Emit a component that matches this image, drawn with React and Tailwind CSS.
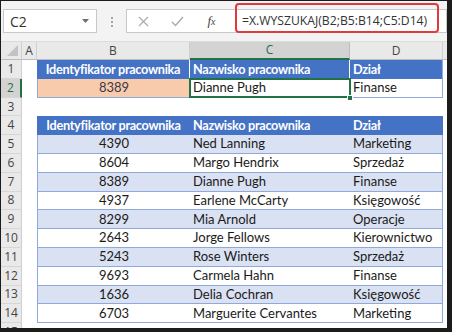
import React from "react";

const data = [
  ["4390", "Ned Lanning", "Marketing"],
  ["8604", "Margo Hendrix", "Sprzedaż"],
  ["8389", "Dianne Pugh", "Finanse"],
  ["4937", "Earlene McCarty", "Księgowość"],
  ["8299", "Mia Arnold", "Operacje"],
  ["2643", "Jorge Fellows", "Kierownictwo"],
  ["5243", "Rose Winters", "Sprzedaż"],
  ["9693", "Carmela Hahn", "Finanse"],
  ["1636", "Delia Cochran", "Księgowość"],
  ["6703", "Marguerite Cervantes", "Marketing"],
];

function RowHead({ n, sel }) {
  return (
    <div
      className={`w-[21px] shrink-0 h-full flex items-center justify-center border-b border-b-[#d6d6d6] text-[12px] [font-family:'Open_Sans',sans-serif] ${
        sel
          ? "bg-[#d3d3d3] text-[#1e7145] border-r-2 border-r-[#217346]"
          : "bg-[#e9e9e9] text-[#444] border-r border-r-[#cfcfcf]"
      }`}
    >
      {n}
    </div>
  );
}

function Row({ n, sel, children }) {
  return (
    <div className="flex h-[18.8px] shrink-0">
      <RowHead n={n} sel={sel} />
      <div className="w-[15px] shrink-0 bg-white" />
      {children}
      <div className="flex-1 bg-white" />
    </div>
  );
}

function EmptyCells() {
  return (
    <>
      <div className="w-[153px] shrink-0 bg-white" />
      <div className="w-[160px] shrink-0 bg-white" />
      <div className="w-[93px] shrink-0 bg-white" />
    </>
  );
}

export default function App() {
  return (
    <div className="w-[452px] h-[332px] overflow-hidden bg-white border-l border-t border-r-[5px] border-b-[4px] border-[#1c1c1c] flex flex-col [font-family:Lato,sans-serif]">
      {/* Formula toolbar */}
      <div className="relative h-[40px] shrink-0 bg-[#f3f3f3] flex items-start pt-[8px]">
        <div className="ml-[2px] w-[94px] h-[24px] shrink-0 bg-white border border-[#c9c9c9] flex items-center justify-between pl-[6px] pr-[7px]">
          <span className="text-[14px] text-[#333] [font-family:'Open_Sans',sans-serif]">C2</span>
          <svg width="7" height="4" viewBox="0 0 7 4">
            <path d="M0 0 L7 0 L3.5 4 Z" fill="#6e6e6e" />
          </svg>
        </div>
        <div className="ml-[14px] mt-[8px] flex flex-col gap-[2px] shrink-0">
          <div className="w-[2px] h-[2px] bg-[#a5a5a5]" />
          <div className="w-[2px] h-[2px] bg-[#a5a5a5]" />
          <div className="w-[2px] h-[2px] bg-[#a5a5a5]" />
        </div>
        <div className="ml-[13px] flex-1 h-[24px] bg-white border border-[#c9c9c9] flex items-center">
          <div className="w-[33px] flex justify-center">
            <svg width="11" height="11" viewBox="0 0 11 11">
              <path d="M1 1 L10 10 M10 1 L1 10" stroke="#ababab" strokeWidth="1.2" />
            </svg>
          </div>
          <div className="w-[35px] flex justify-center">
            <svg width="13" height="11" viewBox="0 0 13 11">
              <path d="M1 6 L4.5 9.5 L12 1" stroke="#ababab" strokeWidth="1.4" fill="none" />
            </svg>
          </div>
          <div className="w-[33px] flex justify-center">
            <span className="italic text-[13px] text-[#444] [font-family:'Liberation_Serif',serif]">
              f<span className="text-[10px]">x</span>
            </span>
          </div>
          <span className="ml-[14px] text-[12.2px] text-[#333] whitespace-nowrap [font-family:'Open_Sans',sans-serif]">
            =X.WYSZUKAJ(B2;B5:B14;C5:D14)
          </span>
        </div>
        <div className="absolute left-[234px] top-[2px] w-[204px] h-[30px] border-2 border-[#e0393e] rounded-[4px]" />
      </div>

      {/* Column headers */}
      <div className="flex h-[19px] shrink-0 bg-[#e9e9e9] border-t border-t-[#dcdcdc] text-[12px] text-[#444] [font-family:'Open_Sans',sans-serif]">
        <div className="w-[21px] shrink-0 border-r border-r-[#cfcfcf] border-b border-b-[#bdbdbd] flex items-end justify-end pr-[3px] pb-[3px]">
          <svg width="11" height="11" viewBox="0 0 11 11">
            <path d="M11 0 L11 11 L0 11 Z" fill="#c3c3c3" />
          </svg>
        </div>
        <div className="w-[15px] shrink-0 border-r border-r-[#cfcfcf] border-b border-b-[#bdbdbd] flex items-center justify-center">A</div>
        <div className="w-[153px] shrink-0 border-r border-r-[#cfcfcf] border-b border-b-[#bdbdbd] flex items-center justify-center">B</div>
        <div className="w-[160px] shrink-0 bg-[#d3d3d3] text-[#1e7145] border-r border-r-[#bdbdbd] border-b-2 border-b-[#217346] flex items-center justify-center">C</div>
        <div className="w-[93px] shrink-0 border-r border-r-[#cfcfcf] border-b border-b-[#bdbdbd] flex items-center justify-center">D</div>
        <div className="flex-1 border-b border-b-[#bdbdbd]" />
      </div>

      {/* Row 1 */}
      <Row n="1">
        <div className="w-[153px] shrink-0 bg-[#4472c4] text-white font-bold text-[12.7px] tracking-[-0.3px] flex items-center justify-center border-r border-r-white">
          Identyfikator pracownika
        </div>
        <div className="w-[160px] shrink-0 bg-[#4472c4] text-white font-bold text-[12.7px] tracking-[-0.3px] flex items-center pl-[3px] border-r border-r-white">
          Nazwisko pracownika
        </div>
        <div className="w-[93px] shrink-0 bg-[#4472c4] text-white font-bold text-[12.7px] tracking-[-0.3px] flex items-center pl-[3px] border-r border-r-[#8eaadb]">
          Dział
        </div>
      </Row>

      {/* Row 2 */}
      <Row n="2" sel>
        <div className="w-[153px] shrink-0 bg-[#f8cbad] text-[#3a3848] text-[13px] flex items-center justify-center border-l border-b border-[#8eaadb]">
          8389
        </div>
        <div className="relative w-[160px] shrink-0 bg-white text-[#1a1a1a] text-[13px] flex items-center pl-[3px]">
          Dianne Pugh
          <div className="absolute -left-[1px] -top-[1px] -right-[1px] bottom-0 border-2 border-[#217346]" />
          <div className="absolute -right-[3px] -bottom-[3px] w-[6px] h-[6px] bg-[#217346] border border-white" />
        </div>
        <div className="w-[93px] shrink-0 bg-white text-[#1a1a1a] text-[13px] flex items-center pl-[3px] border-r border-b border-[#8eaadb]">
          Finanse
        </div>
      </Row>

      {/* Row 3 */}
      <Row n="3">
        <EmptyCells />
      </Row>

      {/* Row 4 */}
      <Row n="4">
        <div className="w-[153px] shrink-0 bg-[#4472c4] text-white font-bold text-[12.7px] tracking-[-0.3px] flex items-center justify-center">
          Identyfikator pracownika
        </div>
        <div className="w-[160px] shrink-0 bg-[#4472c4] text-white font-bold text-[12.7px] tracking-[-0.3px] flex items-center pl-[3px]">
          Nazwisko pracownika
        </div>
        <div className="w-[93px] shrink-0 bg-[#4472c4] text-white font-bold text-[12.7px] tracking-[-0.3px] flex items-center pl-[3px]">
          Dział
        </div>
      </Row>

      {data.map((r, i) => {
        const band = i % 2 === 0 ? "bg-[#d9e1f2]" : "bg-white";
        return (
          <Row n={String(i + 5)} key={i}>
            <div className={`w-[153px] shrink-0 ${band} text-[#1a1a1a] text-[13px] flex items-center justify-center border-l border-b border-[#8eaadb]`}>
              {r[0]}
            </div>
            <div className={`w-[160px] shrink-0 ${band} text-[#1a1a1a] text-[13px] flex items-center pl-[3px] border-b border-[#8eaadb] whitespace-nowrap`}>
              {r[1]}
            </div>
            <div className={`w-[93px] shrink-0 ${band} text-[#1a1a1a] text-[13px] flex items-center pl-[3px] border-r border-b border-[#8eaadb] whitespace-nowrap`}>
              {r[2]}
            </div>
          </Row>
        );
      })}

      <Row n="15">
        <EmptyCells />
      </Row>
    </div>
  );
}
